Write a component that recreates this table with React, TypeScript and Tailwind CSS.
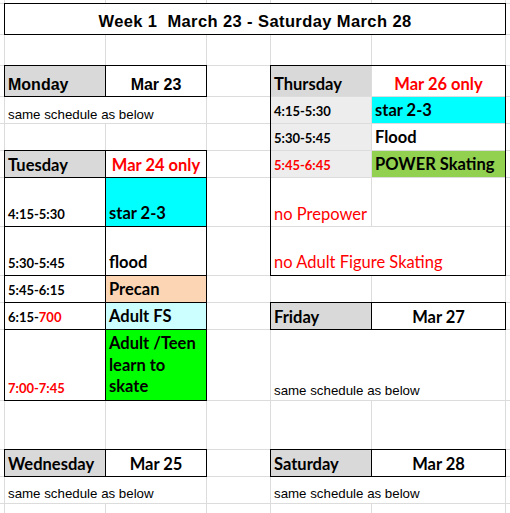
import React from 'react';

// fonts: Liberation Sans stands in for Arial, Lato for Calibri
const arial = "font-['Liberation_Sans',Arial,sans-serif]";
const cal = "font-['Lato',sans-serif]";

type CellProps = { className?: string; bg?: string; children?: React.ReactNode };

const Cell: React.FC<CellProps> = ({ className = '', bg = 'bg-white', children }) => (
  <div className={`flex items-end px-[3px] ${bg} ${className}`}>{children}</div>
);

const Blank: React.FC = () => <div className="bg-white" />;

const Blanks: React.FC<{ n: number }> = ({ n }) => (
  <>
    {Array.from({ length: n }).map((_, i) => (
      <Blank key={i} />
    ))}
  </>
);

const gray = 'bg-[#d9d9d9]';
const light = 'bg-[#ededed]';

const dayHead = `outline outline-black pb-[4px] ${cal} text-[16.5px] font-bold leading-none`;
const dateHead = `justify-center outline outline-black pb-[4px] ${cal} text-[16.5px] font-bold leading-none`;
const timeCell = `outline outline-black pb-[5px] ${cal} text-[13px] font-bold leading-none`;
const actCell = `outline outline-black pb-[5px] ${cal} text-[16.5px] font-bold leading-none`;
const sameText = `pb-[3px] ${arial} text-[13.3px] leading-none`;

const ThursdayBlock: React.FC = () => (
  <div className="col-span-2 row-span-6 grid grid-cols-[100px_133px] grid-rows-[30px_26px_26px_26px_48px_48px] gap-px bg-[#dcdcdc] outline outline-black">
    <Cell bg={gray} className={`pb-[4px] ${cal} text-[16.5px] font-bold leading-none`}>Thursday</Cell>
    <Cell className={`justify-center pb-[4px] ${cal} text-[16.5px] font-bold leading-none text-[#ff0000]`}>Mar 26 only</Cell>
    <Cell bg={light} className={`pb-[5px] ${cal} text-[13px] font-bold leading-none`}>4:15-5:30</Cell>
    <Cell bg="bg-[#00ffff]" className={`pb-[5px] ${cal} text-[16.5px] font-bold leading-none`}>star 2-3</Cell>
    <Cell bg={light} className={`pb-[5px] ${cal} text-[13px] font-bold leading-none`}>5:30-5:45</Cell>
    <Cell className={`pb-[5px] ${cal} text-[16.5px] font-bold leading-none`}>Flood</Cell>
    <Cell bg={light} className={`pb-[5px] ${cal} text-[13px] font-bold leading-none text-[#ff0000]`}>5:45-6:45</Cell>
    <Cell bg="bg-[#92d050]" className={`pb-[4.5px] ${cal} text-[16.5px] font-bold leading-none`}>POWER Skating</Cell>
    <Cell className={`pb-[4px] ${cal} text-[16.5px] leading-none text-[#ff0000]`}>no Prepower</Cell>
    <Blank />
    <Cell className={`col-span-2 pb-[5px] ${cal} text-[16.5px] leading-none text-[#ff0000]`}>no Adult Figure Skating</Cell>
  </div>
);

export default function App() {
  return (
    <div className="grid h-[513px] w-[510px] grid-cols-[4px_100px_100px_63px_100px_133px_4px] grid-rows-[3px_30px_30px_30px_26px_26px_26px_48px_48px_26px_26px_70px_48px_26px_26px_9px] gap-px overflow-hidden bg-[#dcdcdc] text-black">
      {/* row 1 */}
      <Blanks n={7} />

      {/* title */}
      <Blank />
      <Cell className={`col-span-5 justify-center whitespace-pre pb-[4.5px] outline outline-black ${arial} text-[16.5px] font-bold leading-none tracking-[0.4px]`}>
        Week 1  March 23 - Saturday March 28
      </Cell>
      <Blank />

      <Blanks n={7} />

      {/* Monday / Thursday headers */}
      <Blank />
      <Cell bg={gray} className={`outline outline-black pb-[3.5px] ${arial} text-[16px] font-bold leading-none`}>Monday</Cell>
      <Cell className={`justify-center outline outline-black pb-[3.5px] ${arial} text-[16px] font-bold leading-none`}>Mar 23</Cell>
      <Blank />
      <ThursdayBlock />
      <Blank />

      <Blank />
      <Cell className={`col-span-2 pb-[2px] ${arial} text-[13.3px] leading-none`}>same schedule as below</Cell>
      <Blank />
      <Blank />

      <Blanks n={5} />

      {/* Tuesday */}
      <Blank />
      <Cell bg={gray} className={dayHead}>Tuesday</Cell>
      <Cell className={`${dateHead} text-[#ff0000]`}>Mar 24 only</Cell>
      <Blank />
      <Blank />

      <Blank />
      <Cell className={timeCell}>4:15-5:30</Cell>
      <Cell bg="bg-[#00ffff]" className={actCell}>star 2-3</Cell>
      <Blank />
      <Blank />

      <Blank />
      <Cell className={timeCell}>5:30-5:45</Cell>
      <Cell className={actCell}>flood</Cell>
      <Blank />
      <Blank />

      <Blank />
      <Cell className={timeCell}>5:45-6:15</Cell>
      <Cell bg="bg-[#fcd5b4]" className={actCell}>Precan</Cell>
      <Blanks n={4} />

      <Blank />
      <Cell className={timeCell}>
        6:15-<span className="text-[#ff0000]">700</span>
      </Cell>
      <Cell bg="bg-[#ccffff]" className={actCell}>Adult FS</Cell>
      <Blank />
      <Cell bg={gray} className={dayHead}>Friday</Cell>
      <Cell className={dateHead}>Mar 27</Cell>
      <Blank />

      <Blank />
      <Cell className={`${timeCell} text-[#ff0000]`}>7:00-7:45</Cell>
      <Cell bg="bg-[#00ff00]" className={`outline outline-black pb-[2px] ${cal} text-[16.5px] font-bold leading-[21.7px]`}>
        Adult /Teen learn to skate
      </Cell>
      <Blank />
      <Cell className={`col-span-2 ${sameText}`}>same schedule as below</Cell>
      <Blank />

      <Blanks n={7} />

      {/* Wednesday / Saturday */}
      <Blank />
      <Cell bg={gray} className={dayHead}>Wednesday</Cell>
      <Cell className={dateHead}>Mar 25</Cell>
      <Blank />
      <Cell bg={gray} className={dayHead}>Saturday</Cell>
      <Cell className={dateHead}>Mar 28</Cell>
      <Blank />

      <Blank />
      <Cell className={`col-span-2 ${sameText}`}>same schedule as below</Cell>
      <Blank />
      <Cell className={`col-span-2 ${sameText}`}>same schedule as below</Cell>
      <Blank />

      <Blanks n={7} />
    </div>
  );
}
